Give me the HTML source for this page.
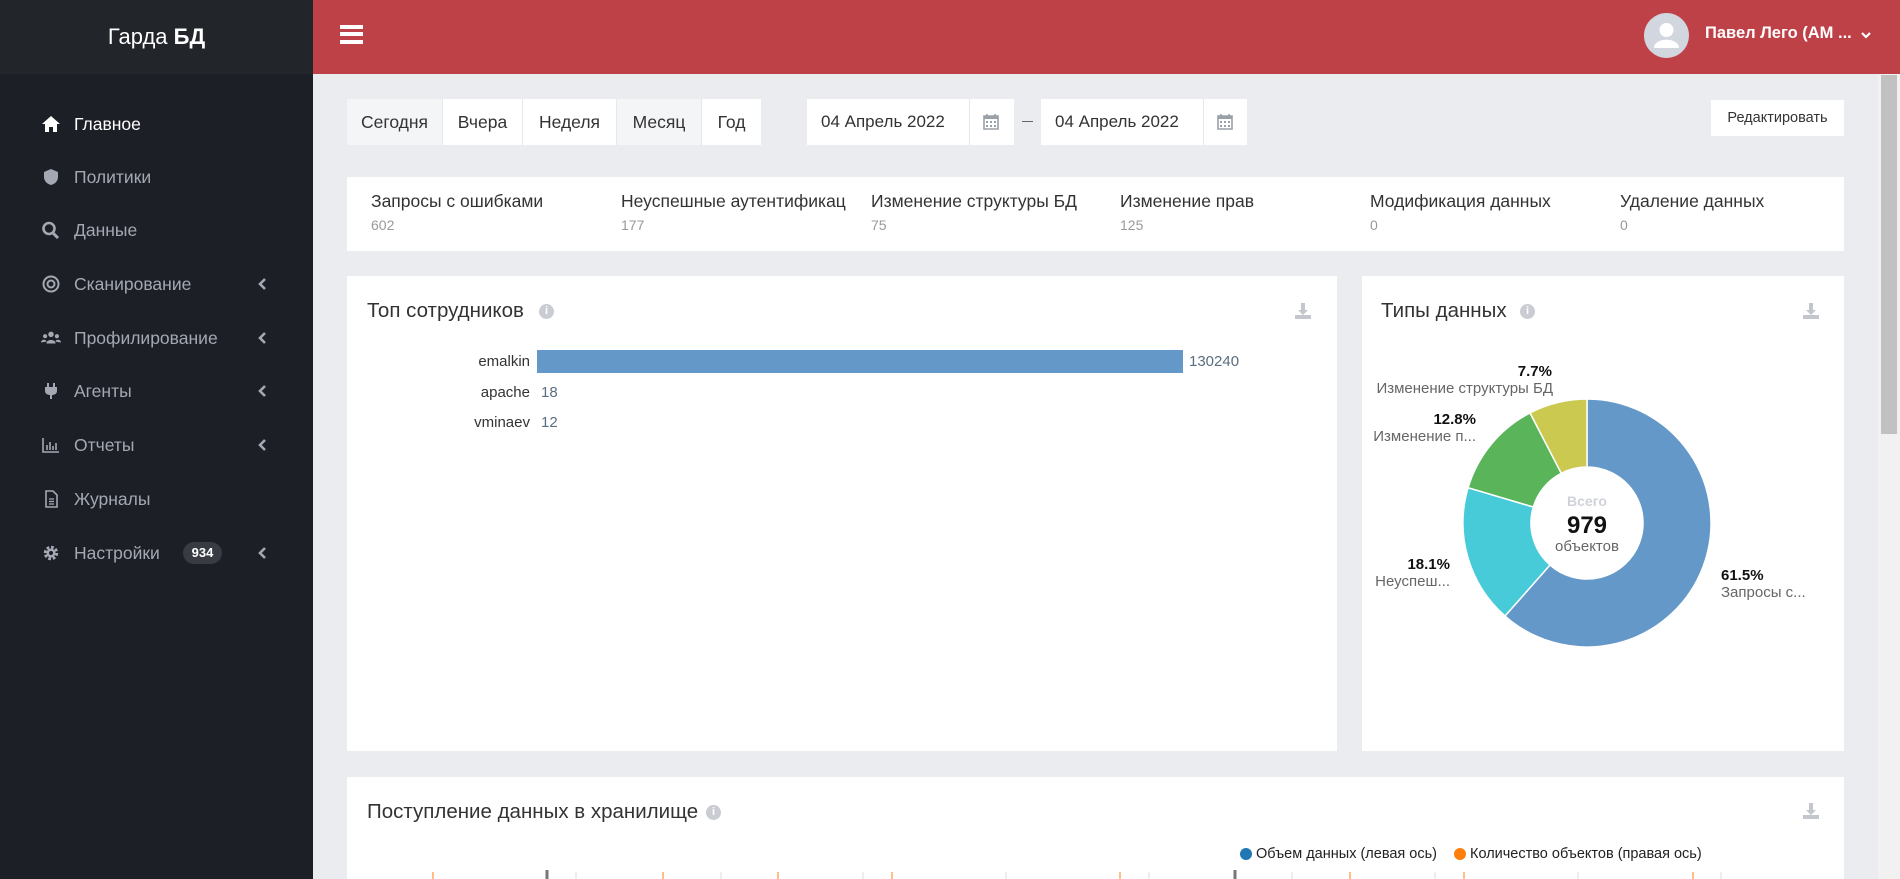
<!DOCTYPE html>
<html><head><meta charset="utf-8"><style>
*{box-sizing:border-box;margin:0;padding:0}
body{width:1900px;height:879px;overflow:hidden;background:#ebecf0;font-family:"Liberation Sans","DejaVu Sans",sans-serif;position:relative;color:#333}
.a{position:absolute}
#side{left:0;top:0;width:313px;height:879px;background:#1c1f26}
#logo{left:0;top:0;width:313px;height:74px;background:#22252a;color:#fff;font-size:22px;text-align:center;line-height:74px}
.mi{left:0;width:313px;height:30px;color:#a3a8b3;font-size:17.5px;line-height:30px}
.mi .ic{position:absolute;left:41px;top:6px;width:20px;height:18px}
.mi .t{position:absolute;left:74px}
.mi .ch{position:absolute;left:258px;top:9px;width:9px;height:12px}
#hdr{left:313px;top:0;width:1587px;height:74px;background:#bf4148}
.card{background:#fff}
.btn{top:99px;height:46px;background:#fff;border-right:1px solid #e6e7eb;font-size:17.5px;line-height:46px;text-align:center;color:#333}
.st .t{font-size:17.5px;color:#333;top:191px}
.st .v{font-size:14px;color:#999;top:217px}
.ttl{font-size:20.5px;color:#333}
.info{width:15px;height:15px;border-radius:50%;background:#c9ccd2;color:#fff;font-size:11px;font-weight:bold;text-align:center;line-height:15px}
.lbl{font-size:15px;color:#333;text-align:right;width:120px}
.val{font-size:15px;color:#5a6e80}
</style></head><body>
<div id="side" class="a"></div>
<div id="logo" class="a">Гарда <b>БД</b></div>

<div class="a mi" style="top:109px;color:#fff"><svg class="ic" viewBox="0 0 20 18"><path d="M10 1 L19 9 H16 V17 H12 V12 H8 V17 H4 V9 H1 Z" fill="#fff"/></svg><span class="t">Главное</span></div>
<div class="a mi" style="top:162px"><svg class="ic" viewBox="0 0 20 18"><path d="M10 1 L17 4 V9 C17 13 14 16 10 17 C6 16 3 13 3 9 V4 Z" fill="#a3a8b3"/></svg><span class="t">Политики</span></div>
<div class="a mi" style="top:215px"><svg class="ic" viewBox="0 0 20 18"><circle cx="8" cy="7.5" r="5.5" stroke="#a3a8b3" stroke-width="2.6" fill="none"/><path d="M12 12 L17 17" stroke="#a3a8b3" stroke-width="3"/></svg><span class="t">Данные</span></div>
<div class="a mi" style="top:269px"><svg class="ic" viewBox="0 0 20 18"><circle cx="10" cy="9" r="7.5" stroke="#a3a8b3" stroke-width="2" fill="none"/><circle cx="10" cy="9" r="3.5" stroke="#a3a8b3" stroke-width="2" fill="none"/></svg><span class="t">Сканирование</span><svg class="ch" viewBox="0 0 9 12"><path d="M7 1 L2 6 L7 11" stroke="#a3a8b3" stroke-width="2.6" fill="none"/></svg></div>
<div class="a mi" style="top:323px"><svg class="ic" viewBox="0 0 22 18"><circle cx="11" cy="5" r="3" fill="#a3a8b3"/><circle cx="4.5" cy="7" r="2.3" fill="#a3a8b3"/><circle cx="17.5" cy="7" r="2.3" fill="#a3a8b3"/><path d="M6 15 C6 10 16 10 16 15Z M0 14 C0 10 6 10 6 13Z M16 13 C16 10 22 10 22 14Z" fill="#a3a8b3"/></svg><span class="t">Профилирование</span><svg class="ch" viewBox="0 0 9 12"><path d="M7 1 L2 6 L7 11" stroke="#a3a8b3" stroke-width="2.6" fill="none"/></svg></div>
<div class="a mi" style="top:376px"><svg class="ic" viewBox="0 0 20 18"><path d="M7 1 V5 M13 1 V5" stroke="#a3a8b3" stroke-width="2"/><path d="M4 5 H16 V9 C16 12 13 13 11 13 V17 H9 V13 C7 13 4 12 4 9Z" fill="#a3a8b3"/></svg><span class="t">Агенты</span><svg class="ch" viewBox="0 0 9 12"><path d="M7 1 L2 6 L7 11" stroke="#a3a8b3" stroke-width="2.6" fill="none"/></svg></div>
<div class="a mi" style="top:430px"><svg class="ic" viewBox="0 0 20 18"><path d="M2 2 V16 H18 M6 14 V9 M9 14 V6 M12 14 V10 M15 14 V7" stroke="#a3a8b3" stroke-width="1.6" fill="none"/></svg><span class="t">Отчеты</span><svg class="ch" viewBox="0 0 9 12"><path d="M7 1 L2 6 L7 11" stroke="#a3a8b3" stroke-width="2.6" fill="none"/></svg></div>
<div class="a mi" style="top:484px"><svg class="ic" viewBox="0 0 20 18"><path d="M5 1 H12 L16 5 V17 H5 Z" stroke="#a3a8b3" stroke-width="1.6" fill="none"/><path d="M8 9 H13 M8 11.5 H13 M8 14 H13" stroke="#a3a8b3" stroke-width="1.2"/></svg><span class="t">Журналы</span></div>
<div class="a mi" style="top:538px"><svg class="ic" viewBox="0 0 20 18"><circle cx="10" cy="9" r="5.5" stroke="#a3a8b3" stroke-width="3.5" fill="none" stroke-dasharray="2.6 1.7"/><circle cx="10" cy="9" r="4.5" fill="#a3a8b3"/><circle cx="10" cy="9" r="2" fill="#1c1f26"/></svg><span class="t">Настройки</span><span class="a" style="left:183px;top:4px;width:39px;height:22px;border-radius:11px;background:#383b42;color:#fff;font-size:13px;font-weight:bold;line-height:22px;text-align:center">934</span><svg class="ch" viewBox="0 0 9 12"><path d="M7 1 L2 6 L7 11" stroke="#a3a8b3" stroke-width="2.6" fill="none"/></svg></div>

<div id="hdr" class="a"></div>
<div class="a" style="left:340px;top:25px;width:23px;height:4px;background:#fff"></div>
<div class="a" style="left:340px;top:32px;width:23px;height:4px;background:#fff"></div>
<div class="a" style="left:340px;top:40px;width:23px;height:4px;background:#fff"></div>
<svg class="a" style="left:1644px;top:13px" width="45" height="45" viewBox="0 0 45 45"><circle cx="22.5" cy="22.5" r="22.5" fill="#d2d6de"/><circle cx="22.5" cy="17" r="7" fill="#fff"/><path d="M10 35 C10 24 35 24 35 35 Z" fill="#fff"/></svg>
<div class="a" style="left:1705px;top:24px;color:#fff;font-weight:bold;font-size:16.5px">Павел Лего (АМ ...</div>
<svg class="a" style="left:1860px;top:31px" width="12" height="9" viewBox="0 0 12 9"><path d="M2 2 L6 6 L10 2" stroke="#fff" stroke-width="2.2" fill="none"/></svg>
<div class="a" style="left:1878px;top:74px;width:22px;height:805px;background:#f1f1f1"></div>
<div class="a" style="left:1881px;top:75px;width:16px;height:359px;background:#c1c1c1"></div>

<div class="a btn" style="left:347px;width:96px;background:#f4f5f7">Сегодня</div>
<div class="a btn" style="left:443px;width:80px">Вчера</div>
<div class="a btn" style="left:523px;width:94px">Неделя</div>
<div class="a btn" style="left:617px;width:85px;background:#f4f5f7">Месяц</div>
<div class="a btn" style="left:702px;width:59px;border:none">Год</div>

<div class="a card" style="left:807px;top:99px;width:207px;height:46px"></div>
<div class="a" style="left:821px;top:112px;font-size:17px">04 Апрель 2022</div>
<div class="a" style="left:969px;top:99px;width:45px;height:46px;border-left:1px solid #e6e7eb"></div>
<div class="a" style="left:1041px;top:99px;width:206px;height:46px;background:#fff"></div>
<div class="a" style="left:1055px;top:112px;font-size:17px">04 Апрель 2022</div>
<div class="a" style="left:1203px;top:99px;width:44px;height:46px;border-left:1px solid #e6e7eb"></div>
<svg class="a" style="left:983px;top:113px" width="16" height="17" viewBox="0 0 16 17"><path d="M1 3 H15 V16 H1Z M4 1 V4 M12 1 V4" stroke="#9aa0a8" stroke-width="1.6" fill="none"/><path d="M1 3 H15 V6 H1Z" fill="#9aa0a8"/><path d="M3 8h2v2H3zM7 8h2v2H7zM11 8h2v2h-2zM3 12h2v2H3zM7 12h2v2H7zM11 12h2v2h-2z" fill="#9aa0a8"/></svg>
<svg class="a" style="left:1217px;top:113px" width="16" height="17" viewBox="0 0 16 17"><path d="M1 3 H15 V16 H1Z M4 1 V4 M12 1 V4" stroke="#9aa0a8" stroke-width="1.6" fill="none"/><path d="M1 3 H15 V6 H1Z" fill="#9aa0a8"/><path d="M3 8h2v2H3zM7 8h2v2H7zM11 8h2v2h-2zM3 12h2v2H3zM7 12h2v2H7zM11 12h2v2h-2z" fill="#9aa0a8"/></svg>
<div class="a" style="left:1022px;top:121px;width:11px;height:1px;background:#666"></div>
<div class="a card" style="left:1711px;top:100px;width:133px;height:36px;font-size:14.5px;line-height:36px;text-align:center">Редактировать</div>

<div class="a card" style="left:347px;top:177px;width:1497px;height:74px"></div>
<div class="st">
<div class="a t" style="left:371px">Запросы с ошибками</div><div class="a v" style="left:371px">602</div>
<div class="a t" style="left:621px;width:225px;overflow:hidden;white-space:nowrap">Неуспешные аутентификац</div><div class="a v" style="left:621px">177</div>
<div class="a t" style="left:871px">Изменение структуры БД</div><div class="a v" style="left:871px">75</div>
<div class="a t" style="left:1120px">Изменение прав</div><div class="a v" style="left:1120px">125</div>
<div class="a t" style="left:1370px">Модификация данных</div><div class="a v" style="left:1370px">0</div>
<div class="a t" style="left:1620px">Удаление данных</div><div class="a v" style="left:1620px">0</div>
</div>

<div class="a card" style="left:347px;top:276px;width:990px;height:475px"></div>
<div class="a ttl" style="left:367px;top:299px">Топ сотрудников</div>
<div class="a info" style="left:539px;top:304px">i</div>
<div class="a card" style="left:1362px;top:276px;width:482px;height:475px"></div>
<div class="a ttl" style="left:1381px;top:299px">Типы данных</div>
<div class="a info" style="left:1520px;top:304px">i</div>
<svg class="a" style="left:1294px;top:302px" width="18" height="18" viewBox="0 0 18 18"><path d="M7 1h4v7h3l-5 5-5-5h3z M1 13h16v4H1z" fill="#c3c6cc"/></svg>
<svg class="a" style="left:1802px;top:302px" width="18" height="18" viewBox="0 0 18 18"><path d="M7 1h4v7h3l-5 5-5-5h3z M1 13h16v4H1z" fill="#c3c6cc"/></svg>

<div class="a lbl" style="left:410px;top:353px">emalkin</div>
<div class="a" style="left:537px;top:350px;width:646px;height:23px;background:#6398c9"></div>
<div class="a val" style="left:1189px;top:353px">130240</div>
<div class="a lbl" style="left:410px;top:384px">apache</div>
<div class="a val" style="left:541px;top:384px">18</div>
<div class="a lbl" style="left:410px;top:414px">vminaev</div>
<div class="a val" style="left:541px;top:414px">12</div>

<svg class="a" style="left:0;top:0" width="1900" height="879">
<g stroke="#fff" stroke-width="1.5">
<path d="M1587 399 A124 124 0 1 1 1505.0 616.0 L1550.0 565.0 A56 56 0 1 0 1587 467 Z" fill="#6398c9"/>
<path d="M1505.0 616.0 A124 124 0 0 1 1468.1 487.7 L1533.3 507.0 A56 56 0 0 0 1550.0 565.0 Z" fill="#47cbd9"/>
<path d="M1468.1 487.7 A124 124 0 0 1 1530.0 412.9 L1561.3 473.3 A56 56 0 0 0 1533.3 507.0 Z" fill="#5ab55a"/>
<path d="M1530.0 412.9 A124 124 0 0 1 1587 399 L1587 467 A56 56 0 0 0 1561.3 473.3 Z" fill="#cbc94f"/>
</g>
<g font-family="Liberation Sans, sans-serif" font-size="15">
<text x="1587" y="506" text-anchor="middle" fill="#cfd2d8" font-weight="bold" font-size="14">Всего</text>
<text x="1587" y="533" text-anchor="middle" fill="#111" font-weight="bold" font-size="24">979</text>
<text x="1587" y="551" text-anchor="middle" fill="#666">объектов</text>
<text x="1552" y="376" text-anchor="end" font-weight="bold" fill="#111">7.7%</text>
<text x="1553" y="393" text-anchor="end" fill="#666">Изменение структуры БД</text>
<text x="1476" y="424" text-anchor="end" font-weight="bold" fill="#111">12.8%</text>
<text x="1476" y="441" text-anchor="end" fill="#666">Изменение п...</text>
<text x="1450" y="569" text-anchor="end" font-weight="bold" fill="#111">18.1%</text>
<text x="1450" y="586" text-anchor="end" fill="#666">Неуспеш...</text>
<text x="1721" y="580" font-weight="bold" fill="#111">61.5%</text>
<text x="1721" y="597" fill="#666">Запросы с...</text>
</g>
</svg>

<div class="a card" style="left:347px;top:777px;width:1497px;height:102px"></div>
<div class="a ttl" style="left:367px;top:800px">Поступление данных в хранилище</div>
<div class="a info" style="left:706px;top:805px">i</div>
<svg class="a" style="left:1802px;top:802px" width="18" height="18" viewBox="0 0 18 18"><path d="M7 1h4v7h3l-5 5-5-5h3z M1 13h16v4H1z" fill="#c3c6cc"/></svg>
<div class="a" style="left:1240px;top:848px;width:12px;height:12px;border-radius:50%;background:#1f77b4"></div>
<div class="a" style="left:1256px;top:846px;font-size:14.5px;color:#222">Объем данных (левая ось)</div>
<div class="a" style="left:1454px;top:848px;width:12px;height:12px;border-radius:50%;background:#ff7f0e"></div>
<div class="a" style="left:1470px;top:846px;font-size:14.5px;color:#222">Количество объектов (правая ось)</div>
<svg class="a" style="left:340px;top:870px" width="1400" height="9">
<g stroke="#ff7f0e" stroke-width="1"><path d="M93 2v7M323 2v7M438 2v7M552 2v7M666 2v7M780 2v7M1010 2v7M1124 2v7M1238 2v7M1353 2v7"/></g>
<g stroke="#ddd"><path d="M236 2v7M381 2v7M523 2v7M666 2v7M809 2v7M952 2v7M1095 2v7M1238 2v7M1381 2v7"/></g>
<g stroke="#777" stroke-width="3"><path d="M207 0v9M895 0v9"/></g><path d="M1404 0v9" stroke="#333"/>
</svg>
</body></html>
